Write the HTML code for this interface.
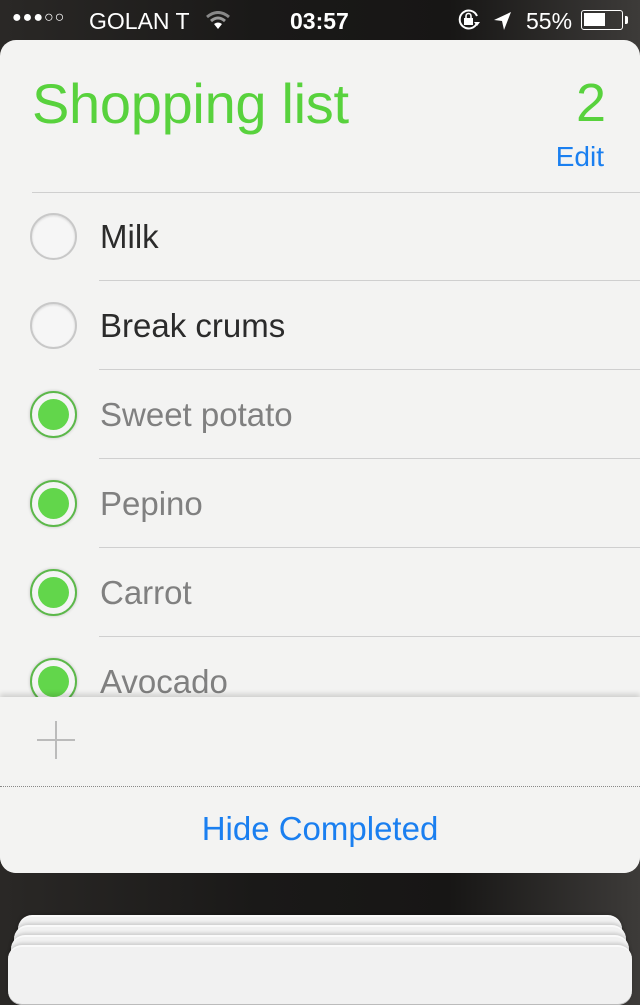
<!DOCTYPE html>
<html><head><meta charset="utf-8"><style>
*{margin:0;padding:0;box-sizing:border-box}
body{width:640px;height:960px;overflow:hidden;background:linear-gradient(90deg,#2a2826 0%,#1a1918 40%,#171615 70%,#3d3b39 100%);font-family:"Liberation Sans",sans-serif;position:relative}
.sb{position:absolute;top:0;left:0;width:640px;height:40px;color:#fff;font-size:23px}
.card{position:absolute;left:0;top:40px;width:640px;height:833px;background:#f3f3f2;border-radius:16px;overflow:hidden}
.title{position:absolute;left:32px;top:31px;font-size:56px;color:#58d23d;letter-spacing:-0.3px}
.num{position:absolute;right:34px;top:32px;font-size:54px;color:#58d23d}
.edit{position:absolute;right:36px;top:101px;font-size:28px;color:#1a7ff0}
.line{position:absolute;height:1px;background:#cfcfcf;right:0}
.row{position:absolute;left:0;width:640px;height:89px}
.c{position:absolute;left:30px;width:47px;height:47px;border-radius:50%;border:2px solid #c8c8c8;background:#f6f6f6;box-shadow:0 1px 2px rgba(0,0,0,.12) inset}
.c.d{border:2px solid #5cb84a;background:#f4f4f4;box-shadow:0 0 3px rgba(0,0,0,.2)}
.c.d::after{content:"";position:absolute;left:6px;top:6px;width:31px;height:31px;border-radius:50%;background:#62d64b}
.t{position:absolute;left:100px;font-size:33px;color:#2b2b2b}
.t.g{color:#808080}
.bot{position:absolute;left:0;top:657px;width:640px;height:176px;background:#f3f3f2;box-shadow:0 -3px 5px rgba(0,0,0,.15)}
.stack{position:absolute;border-radius:14px;background:#f1f1f1;border-top:2px solid #fafafa;box-shadow:0 -1px 0 #bbb inset, 0 -2px 3px rgba(0,0,0,.15)}
</style></head><body>
<div class="sb">
<div style="position:absolute;left:12px;top:9px;font-size:16px;letter-spacing:1px">●●●○○</div>
<div style="position:absolute;left:89px;top:8px">GOLAN T</div>
<svg style="position:absolute;left:205px;top:11px" width="26" height="19" viewBox="0 0 26 19"><path d="M2 6 Q13 -3 24 6" stroke="#888" stroke-width="3" fill="none"/><path d="M6 10 Q13 4 20 10" stroke="#999" stroke-width="3" fill="none"/><path d="M13 18 L9 13 Q13 10 17 13Z" fill="#fff"/></svg>
<div style="position:absolute;left:290px;top:8px;font-weight:bold">03:57</div>
<svg style="position:absolute;left:457px;top:9px" width="26" height="22" viewBox="0 0 26 22"><path d="M20 14 A9 9 0 1 1 20 7" stroke="#fff" stroke-width="2" fill="none"/><path d="M17 13 L23 13 L20 17Z" fill="#fff"/><rect x="7" y="9" width="9" height="7" fill="#fff"/><path d="M9 9 V7 A2.5 2.5 0 0 1 14 7 V9" stroke="#fff" stroke-width="1.6" fill="none"/></svg>
<svg style="position:absolute;left:493px;top:11px" width="20" height="20" viewBox="0 0 20 20"><path d="M18 1 L1 9 L9 10 L11 19Z" fill="#fff"/></svg>
<div style="position:absolute;left:526px;top:8px">55%</div>
<div style="position:absolute;left:581px;top:10px;width:42px;height:20px;border:1.5px solid #fff;border-radius:3px"><div style="position:absolute;left:2px;top:2px;width:21px;height:13px;background:#fff"></div></div>
<div style="position:absolute;left:625px;top:16px;width:3px;height:8px;background:#fff;border-radius:0 2px 2px 0"></div>
</div>
<div class="card">
<div class="title">Shopping list</div>
<div class="num">2</div>
<div class="edit">Edit</div>
<div class="line" style="left:32px;top:152px"></div>
<div class="row" style="top:152px"><div class="c" style="top:21px"></div><div class="t" style="top:26px">Milk</div></div>
<div class="line" style="left:99px;top:240px"></div>
<div class="row" style="top:241px"><div class="c" style="top:21px"></div><div class="t" style="top:26px">Break crums</div></div>
<div class="line" style="left:99px;top:329px"></div>
<div class="row" style="top:330px"><div class="c d" style="top:21px"></div><div class="t g" style="top:26px">Sweet potato</div></div>
<div class="line" style="left:99px;top:418px"></div>
<div class="row" style="top:419px"><div class="c d" style="top:21px"></div><div class="t g" style="top:26px">Pepino</div></div>
<div class="line" style="left:99px;top:507px"></div>
<div class="row" style="top:508px"><div class="c d" style="top:21px"></div><div class="t g" style="top:26px">Carrot</div></div>
<div class="line" style="left:99px;top:596px"></div>
<div class="row" style="top:597px"><div class="c d" style="top:21px"></div><div class="t g" style="top:26px">Avocado</div></div>
<div class="bot">
<div style="position:absolute;left:37px;top:42px;width:38px;height:1.5px;background:#bbb"></div>
<div style="position:absolute;left:55px;top:24px;width:1.5px;height:38px;background:#bbb"></div>
<div style="position:absolute;left:0;top:89px;width:640px;border-top:1px dotted #888"></div>
<div style="position:absolute;left:0;top:113px;width:640px;text-align:center;font-size:33px;color:#1a7ff0">Hide Completed</div>
</div>
</div>
<div class="stack" style="top:915px;left:18px;width:604px;height:60px"></div>
<div class="stack" style="top:925px;left:14px;width:612px;height:60px"></div>
<div class="stack" style="top:935px;left:11px;width:618px;height:60px"></div>
<div class="stack" style="top:945px;left:8px;width:624px;height:60px"></div>
</body></html>
